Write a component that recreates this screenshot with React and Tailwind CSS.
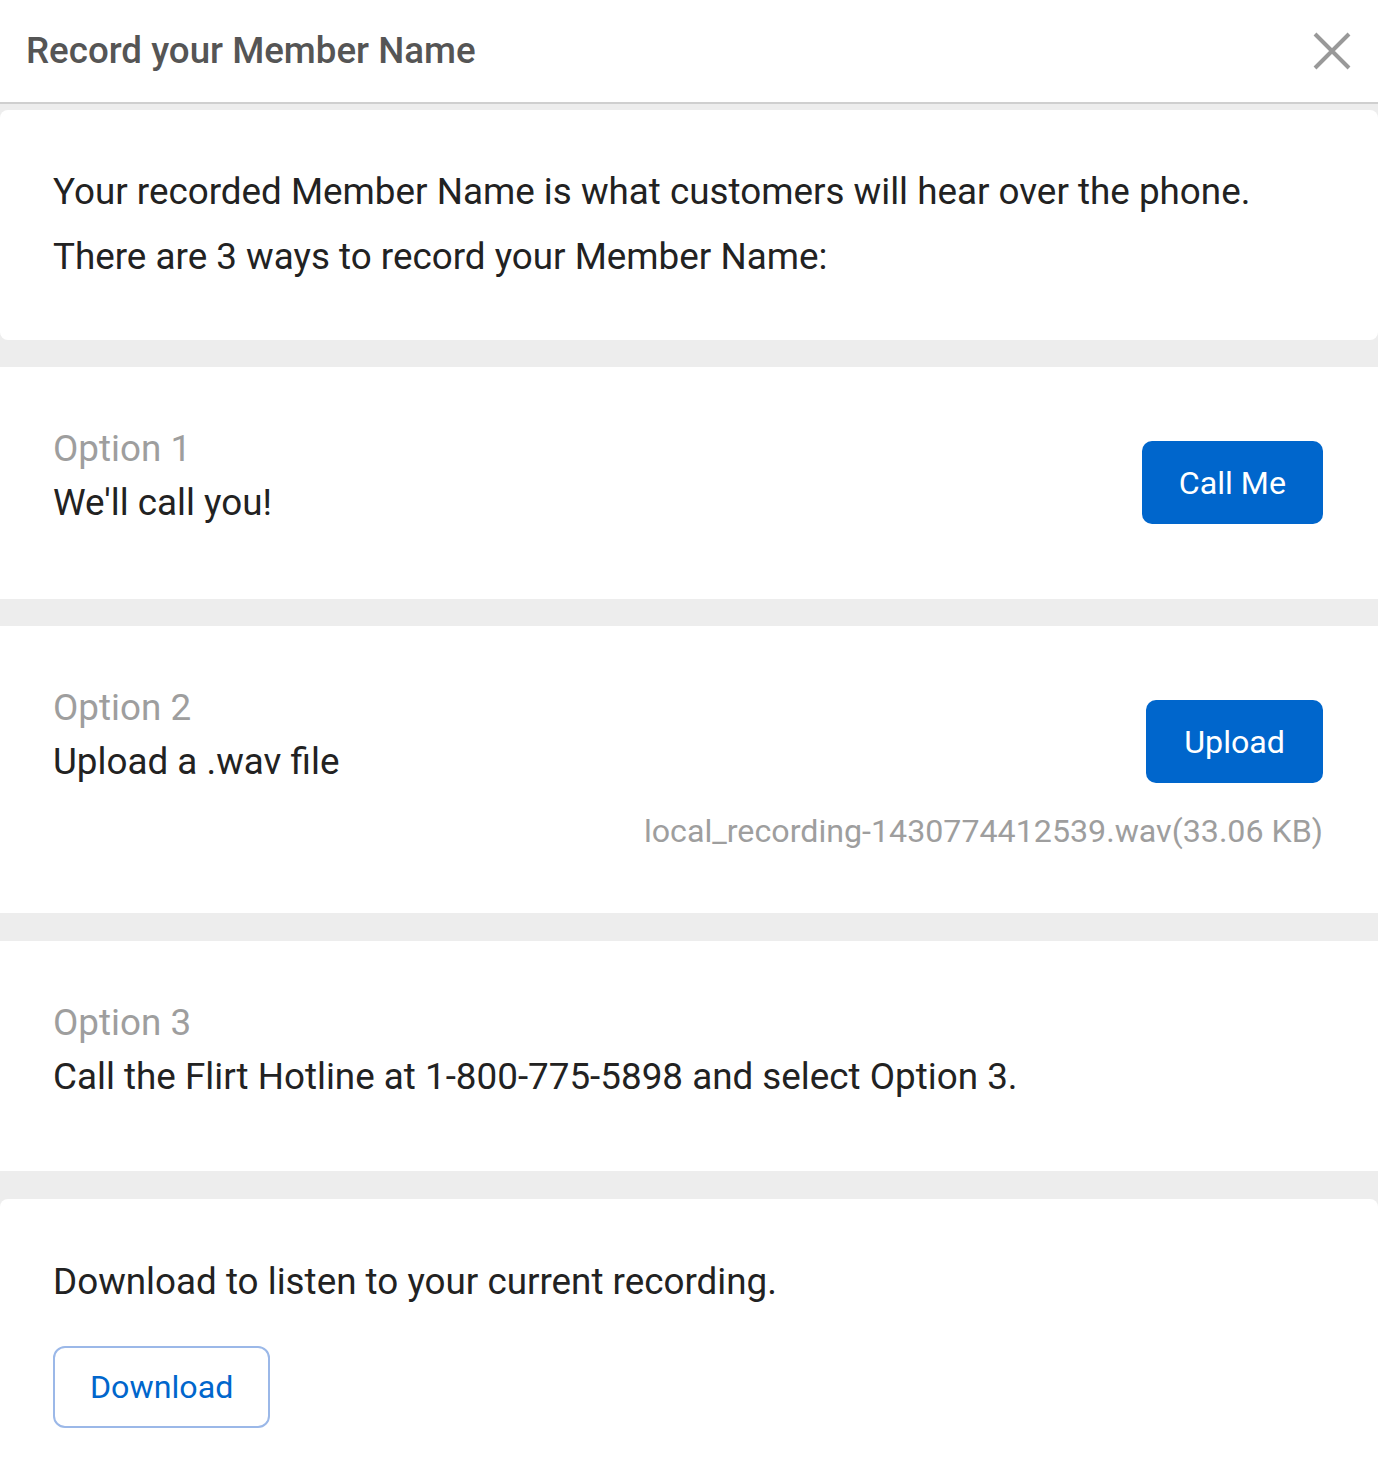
export default function App() {
  return (
    <div
      className="min-h-screen bg-[#ededed] text-[#222]"
      style={{ fontFamily: "Roboto, 'Liberation Sans', sans-serif" }}
    >
      {/* Header */}
      <header className="flex h-[104px] items-center justify-between border-b-2 border-[#cfcfcf] bg-white pl-[26px] pr-[26px]">
        <h1 className="text-[36.7px] font-medium text-[#555]">Record your Member Name</h1>
        <button className="flex h-[40px] w-[40px] items-center justify-center">
          <svg width="38" height="38" viewBox="0 0 38 38">
            <path d="M2 2 L36 36 M36 2 L2 36" stroke="#999" strokeWidth="4" />
          </svg>
        </button>
      </header>

      <div className="pt-[6px]">
        {/* Intro */}
        <section className="rounded-lg bg-white pl-[53px] pr-[55px] pt-[55px] pb-[56px] text-[36.8px] leading-[54px]">
          <p>Your recorded Member Name is what customers will hear over the phone.</p>
          <p className="mt-[11px]">There are 3 ways to record your Member Name:</p>
        </section>

        {/* Option 1 */}
        <section className="mt-[27px] flex items-start justify-between bg-white pl-[53px] pr-[55px] pt-[55px] pb-[69px] text-[36.8px] leading-[54px]">
          <div>
            <div className="text-[#9e9e9e]">Option 1</div>
            <div>We'll call you!</div>
          </div>
          <button className="mt-[19px] h-[83px] rounded-[10px] bg-[#0066cc] px-[37px] text-[32.2px] text-white">
            Call Me
          </button>
        </section>

        {/* Option 2 */}
        <section className="mt-[27px] flex items-start justify-between bg-white pl-[53px] pr-[55px] pt-[55px] pb-[55px] text-[36.8px] leading-[54px]">
          <div>
            <div className="text-[#9e9e9e]">Option 2</div>
            <div>Upload a .wav file</div>
          </div>
          <div className="mt-[19px] flex flex-col items-end">
            <button className="h-[83px] rounded-[10px] bg-[#0066cc] px-[38px] text-[32.2px] text-white">
              Upload
            </button>
            <div className="mt-[21px] text-[32.2px] text-[#9e9e9e]">
              local_recording-1430774412539.wav(33.06 KB)
            </div>
          </div>
        </section>

        {/* Option 3 */}
        <section className="mt-[28px] bg-white pl-[53px] pr-[55px] pt-[55px] pb-[67px] text-[36.8px] leading-[54px]">
          <div className="text-[#9e9e9e]">Option 3</div>
          <div>Call the Flirt Hotline at 1-800-775-5898 and select Option 3.</div>
        </section>

        {/* Download */}
        <section className="mt-[28px] rounded-t-lg bg-white pl-[53px] pr-[55px] pt-[56px] pb-[60px] text-[36.8px] leading-[54px]">
          <p>Download to listen to your current recording.</p>
          <button className="mt-[37px] h-[82px] rounded-[12px] border-2 border-[#9bb8e8] px-[35px] text-[32.2px] text-[#0066cc]">
            Download
          </button>
        </section>
      </div>
    </div>
  );
}
